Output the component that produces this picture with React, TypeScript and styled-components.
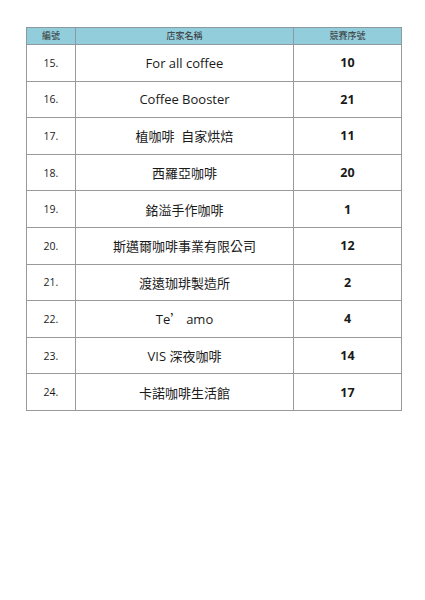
import React from "react";
import styled, { createGlobalStyle } from "styled-components";

const GlobalStyle = createGlobalStyle`
  html, body {
    margin: 0;
    padding: 0;
    background: #ffffff;
  }
  body {
    font-family: "Open Sans", "Noto Sans", "Noto Sans CJK TC", sans-serif;
    color: #111;
  }
`;

const Page = styled.div`
  width: 425px;
  height: 600px;
  padding: 27px 0 0 26px;
  box-sizing: border-box;
`;

const Table = styled.table`
  width: 375px;
  border-collapse: collapse;
  table-layout: fixed;
`;

const HeadCell = styled.th`
  height: 16px;
  padding: 0;
  background: #92cddc;
  border: 1px solid #8a9a9e;
  font-family: "Noto Sans CJK TC", sans-serif;
  font-size: 9px;
  font-weight: 400;
  color: #333;
  text-align: center;
  line-height: 16px;
`;

const Cell = styled.td<{ $kind: "no" | "name" | "seq" }>`
  height: 35.6px;
  padding: 0;
  border: 1px solid #9a9a9a;
  text-align: center;
  vertical-align: middle;
  white-space: pre;
  font-family: "Open Sans", "Noto Sans CJK TC", sans-serif;
  font-size: ${(p) => (p.$kind === "no" ? "10.5px" : p.$kind === "name" ? "13px" : "12.5px")};
  font-weight: ${(p) => (p.$kind === "seq" ? 700 : 400)};
  color: #1a1a1a;
`;

const WideQuote = styled.span`
  font-family: "Noto Sans CJK TC", sans-serif;
`;

const rows: { no: string; name: React.ReactNode; seq: string }[] = [
  { no: "15.", name: "For all coffee", seq: "10" },
  { no: "16.", name: "Coffee Booster", seq: "21" },
  { no: "17.", name: "植咖啡  自家烘焙", seq: "11" },
  { no: "18.", name: "西羅亞咖啡", seq: "20" },
  { no: "19.", name: "銘溢手作咖啡", seq: "1" },
  { no: "20.", name: "斯邁爾咖啡事業有限公司", seq: "12" },
  { no: "21.", name: "渡遠珈琲製造所", seq: "2" },
  {
    no: "22.",
    name: (
      <>
        Te<WideQuote>’ </WideQuote>amo
      </>
    ),
    seq: "4",
  },
  { no: "23.", name: "VIS 深夜咖啡", seq: "14" },
  { no: "24.", name: "卡諾咖啡生活館", seq: "17" },
];

export default function App() {
  return (
    <>
      <GlobalStyle />
      <Page>
        <Table>
          <colgroup>
            <col style={{ width: 49 }} />
            <col style={{ width: 218 }} />
            <col style={{ width: 108 }} />
          </colgroup>
          <thead>
            <tr>
              <HeadCell>編號</HeadCell>
              <HeadCell>店家名稱</HeadCell>
              <HeadCell>競賽序號</HeadCell>
            </tr>
          </thead>
          <tbody>
            {rows.map((r) => (
              <tr key={r.no}>
                <Cell $kind="no">{r.no}</Cell>
                <Cell $kind="name">{r.name}</Cell>
                <Cell $kind="seq">{r.seq}</Cell>
              </tr>
            ))}
          </tbody>
        </Table>
      </Page>
    </>
  );
}
